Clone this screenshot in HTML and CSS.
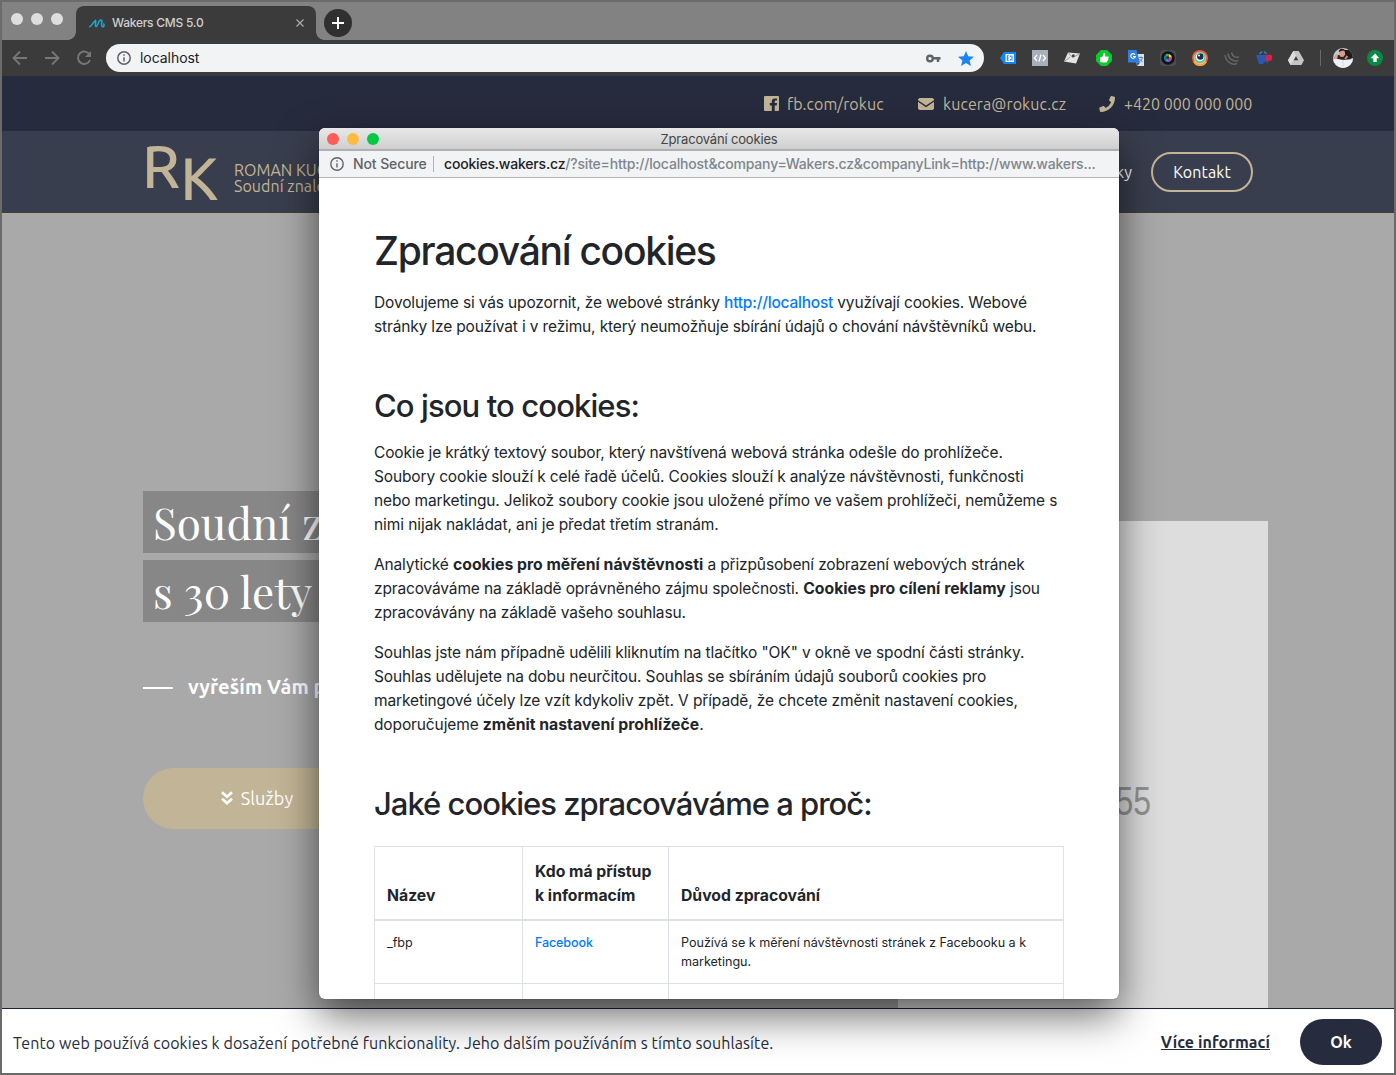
FILE: index.html
```html
<!DOCTYPE html>
<html lang="cs">
<head>
<meta charset="utf-8">
<title>Wakers CMS 5.0</title>
<link rel="stylesheet" href="styles.css">
</head>
<body>
<div class="browser">
  <div class="tabstrip">
    <div class="lights"><i></i><i></i><i></i></div>
    <div class="tab">
      <svg class="fav" width="16" height="9" viewBox="0 0 16 9" fill="none" stroke="#12aee0" stroke-width="1.500" stroke-linecap="round" stroke-linejoin="round"><path d="M.8 7.800C2.800 7 4 3 6.600 1.300 7 3.500 5.600 6.500 7 7.800 9 7 9 1.500 11.500 1 13.500 1 13 3 12.500 4.500 12.500 6.500 13 8 14.200 7.800 15 7.300 15.200 6 14.800 5"/></svg>
      <span class="tab-title">Wakers CMS 5.0</span>
      <svg class="close" width="8" height="8" viewBox="0 0 8 8" stroke="#a8a8a8" stroke-width="1.300"><path d="M.5.5l7 7M7.500.5l-7 7"/></svg>
    </div>
    <div class="newtab"><svg width="12" height="12" viewBox="0 0 12 12" stroke="#fff" stroke-width="1.900"><path d="M6 0v12M0 6h12"/></svg></div>
  </div>

  <div class="toolbar">
    <span class="cell"><svg width="16" height="16" viewBox="0 0 16 16" fill="none" stroke="#777" stroke-width="1.800"><path d="M15 8H2M8 1.500L1.500 8 8 14.500"/></svg></span>
    <span class="cell"><svg width="16" height="16" viewBox="0 0 16 16" fill="none" stroke="#777" stroke-width="1.800"><path d="M1 8h13M8 1.500L14.500 8 8 14.500"/></svg></span>
    <span class="cell"><svg width="16" height="16" viewBox="0 0 16 16" fill="none" stroke="#777" stroke-width="1.900"><path d="M13.500 4.500A6.200 6.200 0 1 0 14 10"/><path d="M15 1v6H9z" fill="#777" stroke="none"/></svg></span>
    <div class="omnibox">
      <svg width="14" height="14" viewBox="0 0 14 14" fill="none" stroke="#5f6368" stroke-width="1.500"><circle cx="7" cy="7" r="6.200"/><path d="M7 6.200v4.300M7 3.300v1.500"/></svg>
      <span class="url">localhost</span>
      <svg class="key" width="15" height="9" viewBox="0 0 15 9" fill="none" stroke="#5f6368" stroke-width="2.400"><circle cx="4" cy="4.500" r="2.800"/><path d="M7 4.300h7.500M12 4.500v3.500"/></svg>
      <svg width="16" height="15" viewBox="0 0 16 15" fill="#1a83f5"><path d="M8 0l2.200 5.200 5.800.5-4.400 3.700L13 15 8 12l-5 3 1.400-5.600L0 5.700l5.800-.5z"/></svg>
    </div>
    <div class="exts">
      <span class="cell"><svg width="16" height="12" viewBox="0 0 16 12"><path d="M4 0h12v12H4L0 6z" fill="#1686f7"/><path d="M5.500 2H14v8H5.500z" fill="#fff"/><path d="M7.300 3.500v5M7 3.800h1.800M7 6h1.800M7 8.200h1.800M10.400 3.500v1.500M10.400 7v1.500M12 3.500v5" stroke="#1686f7" stroke-width="1.100" fill="none"/></svg></span>
      <span class="cell"><svg width="16" height="16" viewBox="0 0 16 16"><path d="M0 0h16v16H0z" fill="#a9afbb"/><path d="M5 5L2.500 8 5 11M11 5l2.500 3L11 11M9 4.500l-2 7" fill="none" stroke="#fff" stroke-width="1.300"/></svg></span>
      <span class="cell"><svg width="16" height="12" viewBox="0 0 16 12"><path d="M4 .5L16 1.500 12 11.500 0 9.500z" fill="#e4e4e4"/><path d="M4.500 1l4 4.500L15.500 2M1 9l5-4" fill="none" stroke="#888" stroke-width=".8"/><circle cx="9.300" cy="3.800" r="1.500" fill="#444"/></svg></span>
      <span class="cell"><svg width="16" height="16" viewBox="0 0 16 16"><path d="M5 0h6l5 5v6l-5 5H5l-5-5V5z" fill="#06cd2c"/><path d="M4 7.300h2L8 2.800c1.500 0 1.500 1.200 1 3.700h3c1 0 .8 1.300.3 1.700.3.800 0 1.400-.5 1.700 0 .8-.2 1.200-.7 1.400 0 .9-.5 1.200-1.100 1.200H6.500L4 12z" fill="#fff"/></svg></span>
      <span class="cell"><svg width="16" height="16" viewBox="0 0 16 16"><path d="M7 4h9v12H9z" fill="#dcdfe3"/><path d="M0 0h8.500l3.500 12.500H0z" fill="#2f7fe0"/><path d="M8.500 12.500h3.500L9.500 16z" fill="#1b55b8"/><path d="M7 4.700A2.300 2.300 0 1 0 7.300 6.500H5" fill="none" stroke="#fff" stroke-width="1.100"/><path d="M11 7.500h4M13 6.500v1M14.500 7.500c-.5 2-1.500 3-2.500 4M11.500 9l3 3" fill="none" stroke="#5a7a94" stroke-width=".9"/></svg></span>
      <span class="cell"><svg width="16" height="16" viewBox="0 0 16 16"><rect width="16" height="16" rx="4" fill="#4b4e55"/><circle cx="8" cy="8" r="6.800" fill="#111216"/><path d="M8 8L5 5A4.200 4.200 0 0 1 9 4z" fill="#3ab05a"/><path d="M8 8L9 4a4.200 4.200 0 0 1 3 3.600z" fill="#f5d327"/><path d="M8 8l4-.4a4.200 4.200 0 0 1-2.600 4.200z" fill="#ec3092"/><path d="M8 8l1.400 3.800A4.200 4.200 0 0 1 4.500 10z" fill="#4a7fe0"/><path d="M8 8l-3.500 2A4.200 4.200 0 0 1 5 5z" fill="#1a7a8a"/><circle cx="8" cy="7.500" r="1.200" fill="#222"/></svg></span>
      <span class="cell"><svg width="16" height="16" viewBox="0 0 16 16"><circle cx="8" cy="8" r="8" fill="#ee5542"/><path d="M1 12A8 8 0 0 0 15 12L8 8z" fill="#f5a13c"/><circle cx="8" cy="8" r="6.300" fill="#f5c06c"/><circle cx="8" cy="7.500" r="5.500" fill="#54c4a8"/><circle cx="8" cy="7" r="4.300" fill="#fff"/><circle cx="8.300" cy="6.500" r="3.200" fill="#173244"/><circle cx="7" cy="5.500" r="1" fill="#fff"/></svg></span>
      <span class="cell"><svg width="16" height="16" viewBox="0 0 16 16" fill="none" stroke="#666" stroke-width="1.500"><path d="M1 5C2 12 8 15.800 13 13.500M4 3.500c.5 5.500 5 8.500 10.500 7M7.500 2.500C8.500 6.500 11.500 8 15 7"/></svg></span>
      <span class="cell"><svg width="17" height="16" viewBox="0 0 17 16"><path d="M0 5h14l-2.500 9H3z" fill="#2a59ad"/><path d="M3.500 4L6 1.500M10.500 4L8 1.500" stroke="#2a7fc9" stroke-width="1.700"/><path d="M7 14l2.500-3 2.500 3z" fill="#3b3b3b"/><circle cx="13" cy="7.800" r="3.300" fill="#de1f4c"/></svg></span>
      <span class="cell"><svg width="16" height="14" viewBox="0 0 16 14"><path d="M5.300 0h5.400L16 9.200 13.400 14H2.600L0 9.200z" fill="#c4c4c4"/><path d="M5.300 0L8 4.600 2.600 14 0 9.200z" fill="#dedede"/><path d="M8 5.200l2.300 4H5.700z" fill="#3b3b3b"/></svg></span>
    </div>
    <span class="divider"></span>
    <svg class="avatar" width="20" height="20" viewBox="0 0 20 20"><defs><clipPath id="face"><circle cx="10" cy="10" r="10"/></clipPath></defs><g clip-path="url(#face)"><path d="M0 0h20v20H0z" fill="#c5c8d2"/><path d="M11 2h9v8h-7z" fill="#1d1a1a"/><path d="M3 6l3 1v4H0z" fill="#e0a08a"/><path d="M5 7h9l5 4-2 1H4z" fill="#2b2325"/><path d="M0 11.500l5-.5 5 1 10-1v9H0z" fill="#eef1f8"/><path d="M10 11.500v8" stroke="#c8cdda" stroke-width=".7"/><ellipse cx="9" cy="5.500" rx="2.800" ry="3.600" fill="#dc9c83"/><path d="M5.800 4C6 0 11 0 12.500 3L9.500 2.500z" fill="#251714"/><path d="M14.500 8L12 11" stroke="#d9947b" stroke-width="1.800"/></g></svg>
    <svg class="update" width="16" height="16" viewBox="0 0 16 16"><circle cx="8" cy="8" r="8" fill="#098a43"/><path d="M8 3.500l4.300 4.700H9.700V12H6.300V8.200H3.700z" fill="#fff"/></svg>
  </div>

  <div class="contacts">
    <div class="contact"><svg width="15" height="15" viewBox="0 0 15 15"><path d="M.7 0h13.600l.7.700v13.600l-.7.700h-3.600V9.400h2l.4-2.300h-2.400V5.700c0-.8.4-1.200 1.200-1.200h1.200V2.400H10.900C8.900 2.400 7.800 3.600 7.800 5.500v1.600H5.800v2.300h2V15H.7l-.7-.7V.7z" fill="#c2b496"/></svg><span class="t-fb">fb.com/rokuc</span></div>
    <div class="contact"><svg width="16" height="12" viewBox="0 0 16 12" fill="#c2b496"><path d="M1.500 0h13L16 1.200v1L8 7.600 0 2.200v-1zM0 3.800l8 5.400 8-5.400v7l-1.500 1.200h-13L0 10.800z"/></svg><span class="t-mail">kucera@rokuc.cz</span></div>
    <div class="contact"><svg width="16" height="16" viewBox="0 0 16 16" fill="#c2b496"><path d="M15.500.8L12.300 0l-.7.400-1.500 3.500.2.900 1.900 1.500a11.500 11.500 0 0 1-5.700 5.700L5 10.100l-.9-.2L.6 11.400l-.4.800.8 3.200.7.600C9.600 16 16 9.600 16 1.500z"/></svg><span class="t-tel">+420 000 000 000</span></div>
  </div>

  <header class="header">
    <div class="logo"><span class="logo-r">R</span><span class="logo-k">K</span></div>
    <div class="owner"><span class="owner-name">ROMAN KUČERA</span><span class="owner-job">Soudní znalec</span></div>
    <nav class="nav"><a class="nav-link">Články</a><a class="pill">Kontakt</a></nav>
  </header>

  <main class="hero">
    <div class="intro">
      <div class="headline">Soudní znalec</div>
      <div class="headline second">s 30 lety praxe</div>
      <div class="lead"><i></i><span>vyřeším Vám problém</span></div>
      <a class="services"><svg width="12" height="14" viewBox="0 0 12 14" fill="none" stroke="#fff" stroke-width="2.700"><path d="M1 1.300l5 4.400 5-4.400M1 7.800l5 4.400 5-4.400"/></svg><span>Služby</span></a>
    </div>
    <div class="placeholder"><span>370x555</span></div>
  </main>

  <footer class="cookiebar">
    <span class="cookie-text">Tento web používá cookies k dosažení potřebné funkcionality. Jeho dalším používáním s tímto souhlasíte.</span>
    <a class="more">Více informací</a>
    <a class="ok">Ok</a>
  </footer>
</div>

<section class="popup">
  <div class="titlebar">
    <div class="dots"><i class="red"></i><i class="yellow"></i><i class="green"></i></div>
    <span>Zpracování cookies</span>
  </div>
  <div class="address">
    <svg width="14" height="14" viewBox="0 0 14 14" fill="none" stroke="#5f6368" stroke-width="1.400"><circle cx="7" cy="7" r="6.200"/><path d="M7 6.200v4.300M7 3.300v1.500"/></svg>
    <span class="insecure">Not Secure</span>
    <span class="link"><b>cookies.wakers.cz</b>/?site=http://localhost&amp;company=Wakers.cz&amp;companyLink=http://www.wakers...</span>
  </div>
  <article class="doc">
    <h1>Zpracování cookies</h1>
    <p>Dovolujeme si vás upozornit, že webové stránky <a class="host">http://localhost</a> využívají cookies. Webové<br>stránky lze používat i v režimu, který neumožňuje sbírání údajů o chování návštěvníků webu.</p>
    <h2>Co jsou to cookies:</h2>
    <p>Cookie je krátký textový soubor, který navštívená webová stránka odešle do prohlížeče.<br>Soubory cookie slouží k celé řadě účelů. Cookies slouží k analýze návštěvnosti, funkčnosti<br>nebo marketingu. Jelikož soubory cookie jsou uložené přímo ve vašem prohlížeči, nemůžeme s<br><span class="looser">nimi nijak nakládat, ani je předat třetím stranám.</span></p>
    <p>Analytické <strong>cookies pro měření návštěvnosti</strong> a přizpůsobení zobrazení webových stránek<br>zpracováváme na základě oprávněného zájmu společnosti. <strong>Cookies pro cílení reklamy</strong> jsou<br>zpracovávány na základě vašeho souhlasu.</p>
    <p class="consent">Souhlas jste nám případně udělili kliknutím na tlačítko "OK" v okně ve spodní části stránky.<br>Souhlas udělujete na dobu neurčitou. Souhlas se sbíráním údajů souborů cookies pro<br>marketingové účely lze vzít kdykoliv zpět. V případě, že chcete změnit nastavení cookies,<br>doporučujeme <strong>změnit nastavení prohlížeče</strong>.</p>
    <h2 class="why">Jaké cookies zpracováváme a proč:</h2>
    <table>
      <thead><tr><th class="c1">Název</th><th class="c2">Kdo má přístup<br>k informacím</th><th>Důvod zpracování</th></tr></thead>
      <tbody>
        <tr><td>_fbp</td><td><a>Facebook</a></td><td>Používá se k měření návštěvnosti stránek z Facebooku a k<br>marketingu.</td></tr>
        <tr><td>&nbsp;</td><td></td><td></td></tr>
      </tbody>
    </table>
  </article>
</section>
</body>
</html>
```
FILE: styles.css
```css
*{box-sizing:border-box}
body{margin:0;width:1396px;height:1075px;overflow:hidden;position:relative;font-family:Ubuntu,"Open Sans","Noto Sans",sans-serif}
svg{display:block;flex:none}
.browser{width:1396px;height:1075px;border:2px solid #6b6b6b;display:flex;flex-direction:column;background:#a9a9a9}

.tabstrip{height:38px;flex:none;background:#828282;display:flex;align-items:flex-end}
.lights{display:flex;gap:8px;align-self:flex-start;padding:11px 0 0 9px;width:74px}
.lights i{width:12px;height:12px;border-radius:50%;background:#dedede}
.tab{position:relative;width:240px;height:34px;background:#3b3b3b;border-radius:8px 8px 0 0;display:flex;align-items:center;padding:0 12px 0 13px}
.tab::before,.tab::after{content:"";position:absolute;bottom:0;width:8px;height:8px}
.tab::before{left:-8px;background:radial-gradient(circle at 0 0,transparent 7.500px,#3b3b3b 8px)}
.tab::after{right:-8px;background:radial-gradient(circle at 100% 0,transparent 7.500px,#3b3b3b 8px)}
.tab-title{font:550 12px/16px Inter,sans-serif;letter-spacing:-.25px;color:#cfcfcf;margin-left:7px;flex:1}
.newtab{width:28px;height:28px;border-radius:50%;background:#303030;display:flex;align-items:center;justify-content:center;margin:0 0 3px 8px}

.toolbar{height:36px;flex:none;background:#3b3b3b;display:flex;align-items:center;padding-left:2px}
.cell{width:32px;display:flex;justify-content:center;flex:none}
.omnibox{width:878px;height:28px;margin:0 8px 0 6px;border-radius:14px;background:#f1f3f4;display:flex;align-items:center;padding:0 10px 0 11px}
.url{font:430 14px/18px Inter,sans-serif;letter-spacing:-.05px;color:#202124;margin-left:9px;flex:1}
.key{margin-right:17px}
.exts{display:flex;align-items:center}
.divider{width:1px;height:16px;background:#6a6a6a;margin:0 12px 0 8px}
.update{margin-left:14px}

.contacts{height:55px;flex:none;background:#262b3d;display:flex;align-items:center;justify-content:flex-end;gap:34px;padding-right:142px;color:#c2b496;font-size:16px}
.contact{display:flex;align-items:center;gap:9px;white-space:nowrap}
.contact:first-child{gap:8px}
.contact:nth-child(-n+2){position:relative;left:1px}
.t-fb{width:97px;letter-spacing:.08px}
.t-mail{width:123px;letter-spacing:.1px}
.t-tel{width:128px}

.header{height:83px;flex:none;background:#393e4e;border-bottom:1px solid #b5aa91;display:flex;color:#c2b496}
.logo{display:flex;margin-left:140px;width:92px;height:82px;font-size:60px;line-height:72px;font-weight:500}
.logo-r{margin-top:-1px}
.logo-k{padding-top:11px}
.owner{display:flex;flex-direction:column;font-size:16px;line-height:16px;padding-top:31px;width:220px;letter-spacing:.05px}
.nav{display:flex;align-items:center;margin-left:auto;padding-right:141px;color:#fff;font-size:16px;letter-spacing:.1px}
.nav-link{margin-right:19px}
.pill{width:102px;height:40px;border:2px solid #c2b496;border-radius:20px;display:flex;align-items:center;justify-content:center}

.hero{height:794px;flex:none;display:flex;justify-content:space-between;align-items:flex-end;padding:0 126px 0 141px;background:#a9a9a9}
.intro{width:500px;height:517px;color:#fff}
.headline{width:340px;height:62px;padding-left:10px;background:#878787;font:44px/62px "Playfair Display","Liberation Serif",serif;white-space:nowrap}
.second{margin-top:7px;letter-spacing:.07px}
.lead{display:flex;align-items:center;margin-top:52px;height:28px;font-size:20px;font-weight:700;white-space:nowrap}
.lead i{width:30px;height:2px;background:#fff;margin-right:15px}
.lead span{padding-bottom:3px;letter-spacing:.1px}
.services{display:flex;align-items:center;justify-content:center;gap:8px;width:228px;height:61px;border-radius:31px;background:#c2b496;margin-top:66px;padding-bottom:1px;font-size:18px;letter-spacing:.12px}
.placeholder{width:370px;height:487px;background:#ddd;display:flex;justify-content:center;padding:257px 0 0 14px;color:#929292;font:40px/46px "Liberation Sans",sans-serif}
.placeholder span{transform:scaleX(.8);height:46px}

.cookiebar{height:65px;flex:none;background:#fff;border-top:1px solid #1c2138;display:flex;align-items:center;padding:2px 12px 0 11px;color:#262b3d;font-size:16px}
.cookie-text{flex:1;letter-spacing:.1px;padding-top:1px}
.more{font-weight:700;text-decoration:underline;margin-right:30px;letter-spacing:.08px}
.ok{width:82px;height:46px;border-radius:23px;background:#262b3d;color:#fff;font-weight:700;display:flex;align-items:center;justify-content:center}

.popup{position:absolute;left:319px;top:128px;width:800px;height:871px;border-radius:6px;overflow:hidden;background:#fff;box-shadow:0 0 1px rgba(0,0,0,.5),0 17px 42px rgba(0,0,0,.58);font-family:Inter,sans-serif;color:#212529}
.titlebar{height:23px;background:linear-gradient(#e8e8e8,#cfcfcf);border-bottom:2px solid #b0b0b0;display:flex;align-items:center;justify-content:center;font-size:13px;letter-spacing:-.17px;color:#444;position:relative}
.dots{position:absolute;left:8px;top:5px;display:flex;gap:8px}
.dots i{width:12px;height:12px;border-radius:50%}
.red{background:#ff5b57}
.yellow{background:#ffbc40}
.green{background:#05c844}
.address{height:27px;background:#f1f3f4;border-bottom:1px solid #b3b5b7;display:flex;align-items:center;padding-left:11px;font-size:14px;line-height:16px;font-weight:450;white-space:nowrap}
.insecure{margin-left:9px;width:81px;letter-spacing:-.1px;color:#5f6368;border-right:1px solid #b0b3b6;height:16px}
.link{margin:-1px 0 0 10px;letter-spacing:-.19px;color:#80868b}
.link b{font-weight:450;color:#202124}

.doc{padding:49px 55px 0;font-size:15.500px;line-height:24px;font-weight:430;letter-spacing:-.147px;white-space:nowrap}
h1{margin:0 0 16px;font-size:39px;line-height:48px;font-weight:540;letter-spacing:-1.280px}
p{margin:0 0 16px}
h2{margin:47px 0 16px;font-size:31px;line-height:39px;font-weight:530;letter-spacing:-.890px}
.why{margin-bottom:23px;letter-spacing:-1px}
strong{font-size:15.750px;letter-spacing:.02px;font-weight:700}
a{color:inherit}
.looser{letter-spacing:-.08px}
.consent{letter-spacing:-.12px}
.host,td a{color:#007bff;font-weight:500}
.host{letter-spacing:-.22px}
table{width:690px;border-collapse:collapse;table-layout:fixed}
th,td{border:1px solid #dee2e6;padding:12px;text-align:left;vertical-align:top}
th{padding:13px 12px 11px;font-size:15.750px;letter-spacing:0;font-weight:700;vertical-align:bottom;border-bottom-width:2px}
td{font-size:12.600px;line-height:19px;letter-spacing:-.03px}
td a{letter-spacing:-.15px}
.c1{width:148px}
.c2{width:146px}
```
